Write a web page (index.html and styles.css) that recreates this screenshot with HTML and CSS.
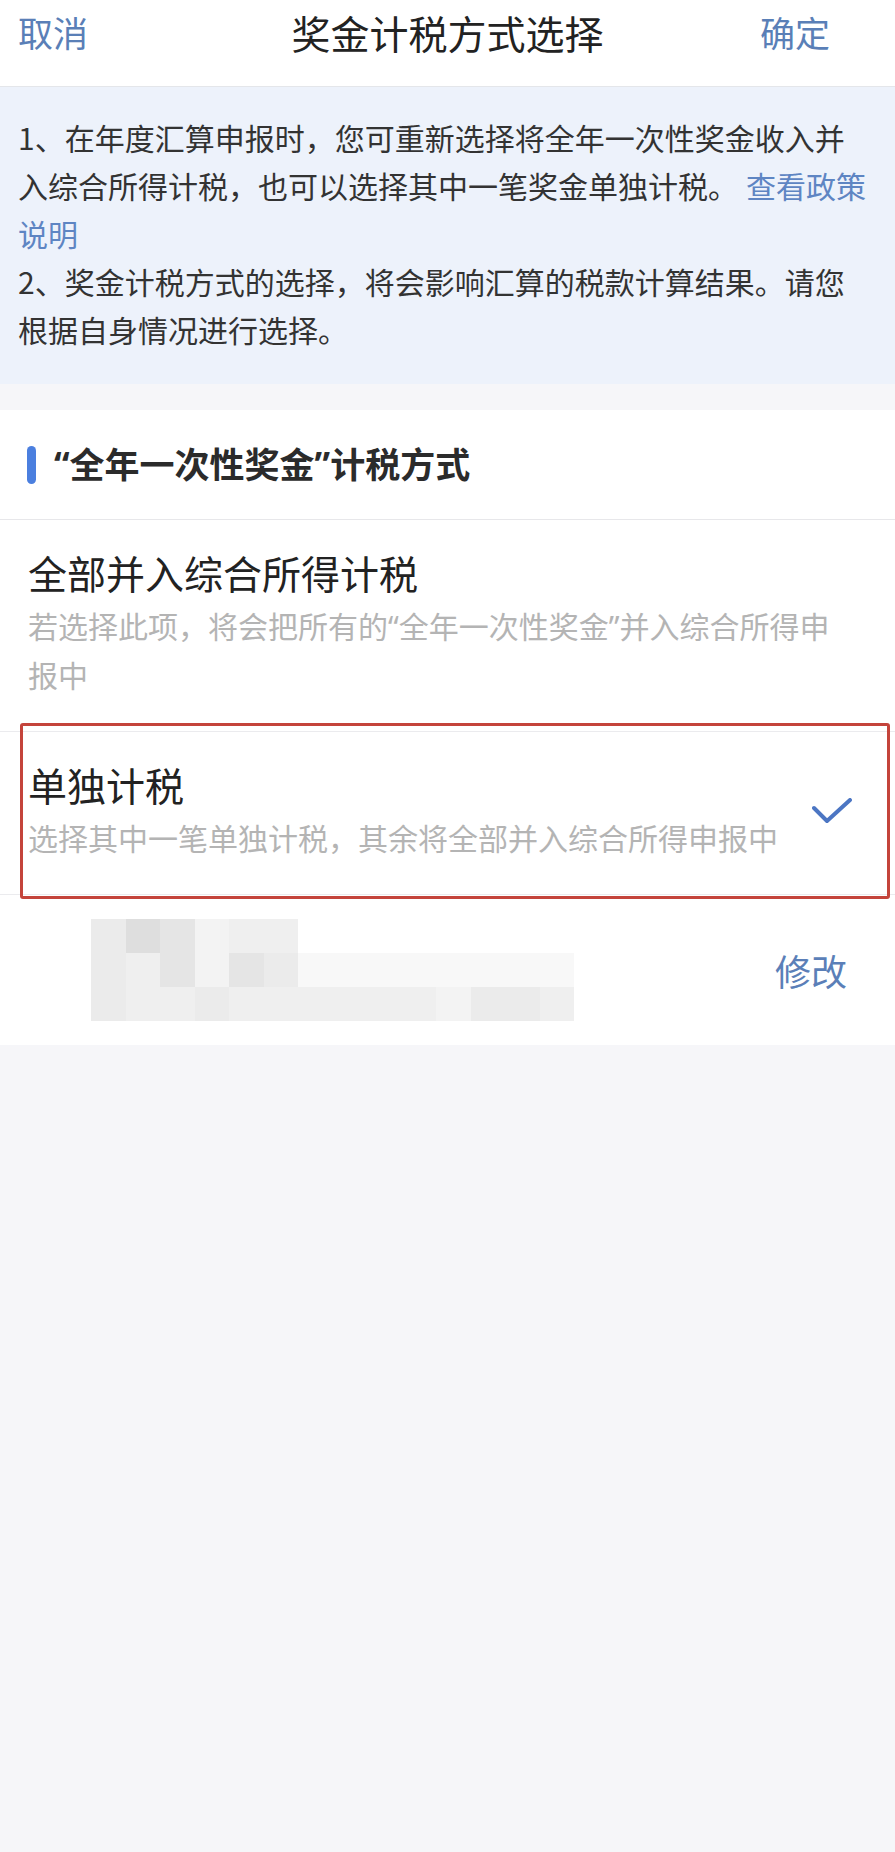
FILE: index.html
```html
<!DOCTYPE html>
<html lang="zh-CN">
<head>
    <meta charset="UTF-8">
    <meta name="viewport" content="width=device-width, initial-scale=1.0">
    <title>奖金计税方式选择</title>
    <link rel="stylesheet" href="styles.css">
</head>
<body>

    <div class="nav">
        <span class="nav-btn">取消</span>
        <span class="nav-title">奖金计税方式选择</span>
        <span class="nav-btn right">确定</span>
    </div>

    <div class="notice">
        <p>1、在年度汇算申报时，您可重新选择将全年一次性奖金收入并入综合所得计税，也可以选择其中一笔奖金单独计税。<span class="link">查看政策说明</span></p>
        <p>2、奖金计税方式的选择，将会影响汇算的税款计算结果。请您根据自身情况进行选择。</p>
    </div>

    <div class="section">
        <div class="section-head">
            <span class="bar"></span>
            <span class="section-title">“全年一次性奖金”计税方式</span>
        </div>

        <div class="option">
            <div class="option-text">
                <div class="option-title">全部并入综合所得计税</div>
                <div class="option-desc">若选择此项，将会把所有的“全年一次性奖金”并入综合所得申报中</div>
            </div>
        </div>

        <div class="option marked">
            <div class="option-text">
                <div class="option-title">单独计税</div>
                <div class="option-desc">选择其中一笔单独计税，其余将全部并入综合所得申报中</div>
            </div>
            <svg class="check" width="40" height="26" viewBox="0 0 40 26">
                <polyline points="2,10 15,23 38,2" fill="none" stroke="#4c76c3" stroke-width="4" stroke-linecap="round" stroke-linejoin="round"/>
            </svg>
        </div>

        <div class="bonus-row">
            <!-- pixelated (hidden) bonus record -->
            <div class="mosaic">
                <span class="s3"></span><span class="s1"></span><span class="s2"></span><span class="s5"></span><span class="s4"></span><span class="s4"></span>
                <span></span><span></span><span></span><span></span><span></span><span></span><span></span><span></span>
                <span class="s3"></span><span class="s4"></span><span class="s2"></span><span class="s5"></span><span class="s2"></span><span class="s3"></span>
                <span class="s6"></span><span class="s6"></span><span class="s6"></span><span class="s6"></span><span class="s6"></span><span class="s6"></span><span class="s6"></span><span class="s6"></span>
                <span class="s3"></span><span class="s4"></span><span class="s4"></span><span class="s3"></span><span class="s4"></span><span class="s4"></span>
                <span class="s4"></span><span class="s4"></span><span class="s4"></span><span class="s4"></span><span class="s5"></span><span class="s3"></span><span class="s3"></span><span class="s4"></span>
            </div>
            <span class="edit">修改</span>
        </div>
    </div>

</body>
</html>
```

FILE: styles.css
```css
/* General Reset */
* {
    margin: 0;
    padding: 0;
    box-sizing: border-box;
}

body {
    font-family: "Noto Sans CJK SC", "Noto Sans", sans-serif;
    background-color: #f6f6f9;
    color: #333;
    min-height: 1852px;
}

/* Top bar */
.nav {
    display: grid;
    grid-template-columns: 1fr auto 1fr;
    align-items: start;
    height: 87px;
    padding: 0 18px;
    background-color: #fff;
    border-bottom: 1px solid #e4e6ea;
    box-shadow: 0 1px 3px rgba(0, 0, 0, 0.05);
    line-height: 64px;
}

.nav-btn {
    font-size: 35px;
    color: #5a7fb7;
    justify-self: start;
}

.nav-btn.right {
    justify-self: end;
    padding-right: 47px;
}

.nav-title {
    font-size: 39px;
    color: #222;
}

/* Notice box */
.notice {
    background-color: #edf2fb;
    padding: 26px 25px 31px 18px;
    font-size: 30px;
    line-height: 48px;
    color: #333;
}

.notice .link {
    color: #5e85c3;
    margin-left: 8px;
}

/* Options */
.section {
    margin-top: 26px;
    background-color: #fff;
}

.section-head {
    display: flex;
    align-items: center;
    height: 110px;
    padding-left: 27px;
    border-bottom: 1px solid #e7e7ea;
}

.bar {
    width: 9px;
    height: 38px;
    border-radius: 5px;
    background-color: #4b7fdf;
    margin-right: 18px;
}

/* latin font first so the quotes stay narrow */
.section-title,
.option-desc {
    font-family: "Noto Sans", "Noto Sans CJK SC", sans-serif;
}

.section-title {
    font-size: 35px;
    line-height: 44px;
    font-weight: 700;
    color: #2b2b2b;
}

.option {
    display: flex;
    align-items: center;
    padding: 22px 43px 31px 28px;
    border-bottom: 1px solid #ebebee;
}

.option.marked {
    position: relative;
}

/* red annotation frame */
.option.marked::after {
    content: "";
    position: absolute;
    top: -9px;
    bottom: -5px;
    left: 20px;
    right: 5px;
    border: 3px solid #c4443b;
    border-radius: 3px;
    pointer-events: none;
}

.option-text {
    flex: 1;
}

.option-title {
    font-size: 39px;
    line-height: 60px;
    color: #222;
}

.option-desc {
    font-size: 30px;
    line-height: 49px;
    color: #b4b4b4;
}

.check {
    flex-shrink: 0;
    margin-top: 4px;
}

.bonus-row {
    display: flex;
    align-items: center;
    justify-content: space-between;
    height: 150px;
    padding: 0 48px 0 91px;
}

.mosaic {
    display: grid;
    grid-template-columns: repeat(14, 34.5px);
    grid-auto-rows: 34.3px;
}

.mosaic .s1 { background-color: #dedede; }
.mosaic .s2 { background-color: #e5e5e5; }
.mosaic .s3 { background-color: #ebebeb; }
.mosaic .s4 { background-color: #efefef; }
.mosaic .s5 { background-color: #f3f3f3; }
.mosaic .s6 { background-color: #f8f8f8; }

.edit {
    font-size: 36px;
    color: #5b7fb8;
}
```
